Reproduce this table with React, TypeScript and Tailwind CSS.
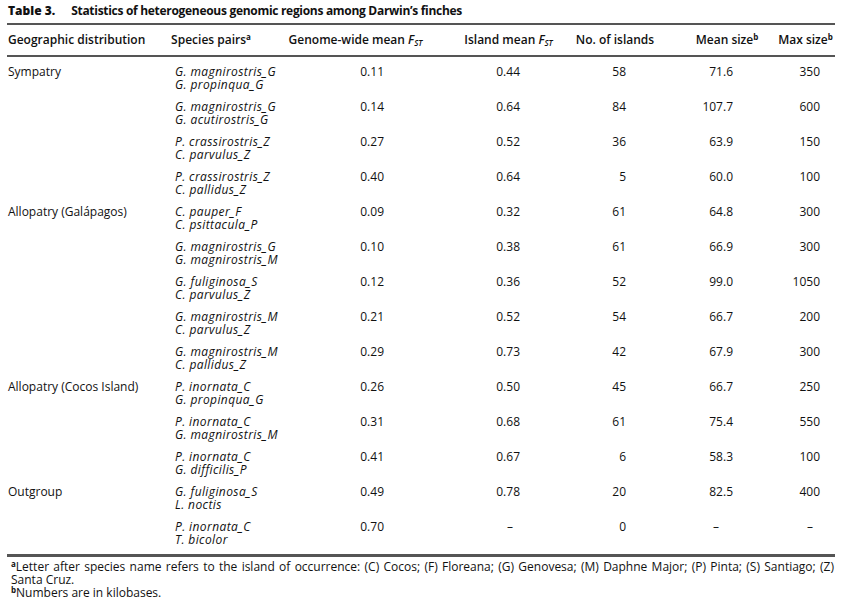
import React from "react";

type Row = {
  group?: string;
  sp1: string;
  sp2: string;
  gw: string;
  isl: string;
  n: string;
  mean: string;
  max: string;
};

const rows: Row[] = [
  { group: "Sympatry", sp1: "G. magnirostris_G", sp2: "G. propinqua_G", gw: "0.11", isl: "0.44", n: "58", mean: "71.6", max: "350" },
  { sp1: "G. magnirostris_G", sp2: "G. acutirostris_G", gw: "0.14", isl: "0.64", n: "84", mean: "107.7", max: "600" },
  { sp1: "P. crassirostris_Z", sp2: "C. parvulus_Z", gw: "0.27", isl: "0.52", n: "36", mean: "63.9", max: "150" },
  { sp1: "P. crassirostris_Z", sp2: "C. pallidus_Z", gw: "0.40", isl: "0.64", n: "5", mean: "60.0", max: "100" },
  { group: "Allopatry (Galápagos)", sp1: "C. pauper_F", sp2: "C. psittacula_P", gw: "0.09", isl: "0.32", n: "61", mean: "64.8", max: "300" },
  { sp1: "G. magnirostris_G", sp2: "G. magnirostris_M", gw: "0.10", isl: "0.38", n: "61", mean: "66.9", max: "300" },
  { sp1: "G. fuliginosa_S", sp2: "C. parvulus_Z", gw: "0.12", isl: "0.36", n: "52", mean: "99.0", max: "1050" },
  { sp1: "G. magnirostris_M", sp2: "C. parvulus_Z", gw: "0.21", isl: "0.52", n: "54", mean: "66.7", max: "200" },
  { sp1: "G. magnirostris_M", sp2: "C. pallidus_Z", gw: "0.29", isl: "0.73", n: "42", mean: "67.9", max: "300" },
  { group: "Allopatry (Cocos Island)", sp1: "P. inornata_C", sp2: "G. propinqua_G", gw: "0.26", isl: "0.50", n: "45", mean: "66.7", max: "250" },
  { sp1: "P. inornata_C", sp2: "G. magnirostris_M", gw: "0.31", isl: "0.68", n: "61", mean: "75.4", max: "550" },
  { sp1: "P. inornata_C", sp2: "G. difficilis_P", gw: "0.41", isl: "0.67", n: "6", mean: "58.3", max: "100" },
  { group: "Outgroup", sp1: "G. fuliginosa_S", sp2: "L. noctis", gw: "0.49", isl: "0.78", n: "20", mean: "82.5", max: "400" },
  { sp1: "P. inornata_C", sp2: "T. bicolor", gw: "0.70", isl: "–", n: "0", mean: "–", max: "–" },
];

function Fst() {
  return (
    <span className="italic">
      F<span className="text-[8px] relative top-[2px] leading-none">ST</span>
    </span>
  );
}

function Sup({ c }: { c: string }) {
  return <span className="text-[8px] relative top-[-4px] leading-none font-bold">{c}</span>;
}

export default function App() {
  return (
    <div
      className="w-[842px] h-[612px] bg-white text-[#111] pl-[7px] pr-[7px] pt-[4px]"
      style={{ fontFamily: "'Open Sans', Lato, sans-serif" }}
    >
      <div className="text-[12px] leading-[14px] font-bold pl-[1px] flex">
        <span className="font-extrabold">Table 3.</span>
        <span className="ml-[16px] font-bold tracking-[-0.3px]">Statistics of heterogeneous genomic regions among Darwin’s finches</span>
      </div>
      <table className="table-fixed border-collapse w-[828px] mt-[5px] text-[12px] leading-[13px]">
        <colgroup>
          <col className="w-[158px]" />
          <col className="w-[113px]" />
          <col className="w-[174px]" />
          <col className="w-[110px]" />
          <col className="w-[112px]" />
          <col className="w-[100px]" />
          <col className="w-[61px]" />
        </colgroup>
        <thead>
          <tr className="border-t-2 border-b-2 border-[#555]">
            <th className="text-left font-semibold pl-[1px] h-[32px] pb-[1px] whitespace-nowrap">Geographic distribution</th>
            <th className="text-center font-semibold pr-[21px] pb-[1px] whitespace-nowrap">
              Species pairs<Sup c="a" />
            </th>
            <th className="text-center font-semibold pr-[19px] pb-[1px] whitespace-nowrap">
              Genome-wide mean <Fst />
            </th>
            <th className="text-center font-semibold pl-[3px] pb-[1px] whitespace-nowrap">
              Island mean <Fst />
            </th>
            <th className="text-center font-semibold pr-[6px] pb-[1px] whitespace-nowrap">No. of islands</th>
            <th className="text-center font-semibold pl-[6px] pb-[1px] whitespace-nowrap">
              Mean size<Sup c="b" />
            </th>
            <th className="text-center font-semibold pl-[2px] pb-[1px] whitespace-nowrap">
              <div className="flex justify-center">
                <span>
                  Max size<Sup c="b" />
                </span>
              </div>
            </th>
          </tr>
        </thead>
        <tbody>
          {rows.map((r, i) => {
            const pt = i === 0 ? "pt-[8px]" : "pt-[5px]";
            const pb = i === rows.length - 1 ? "pb-[8px]" : "pb-[4px]";
            const cell = `${pt} ${pb} align-top`;
            return (
              <tr key={i}>
                <td className={`${cell} pl-[1px] whitespace-nowrap`}>{r.group ?? ""}</td>
                <td className={`${cell} pl-[10px] italic whitespace-nowrap tracking-[0.4px]`}>
                  <div>{r.sp1}</div>
                  <div>{r.sp2}</div>
                </td>
                <td className={`${cell} text-right pr-[68px]`}>{r.gw}</td>
                <td className={`${cell} text-right ${r.isl === "–" ? "pr-[49px]" : "pr-[42px]"}`}>{r.isl}</td>
                <td className={`${cell} text-right pr-[48px]`}>{r.n}</td>
                <td className={`${cell} text-right ${r.mean === "–" ? "pr-[55px]" : "pr-[41px]"}`}>{r.mean}</td>
                <td className={`${cell} text-right ${r.max === "–" ? "pr-[22px]" : "pr-[15px]"}`}>{r.max}</td>
              </tr>
            );
          })}
        </tbody>
      </table>
      <div className="border-t-[3px] border-[#555] w-[828px] pt-[3px] text-[12px] leading-[13px] pl-[4px] pr-[1px]">
        <p className="text-justify">
          <Sup c="a" />Letter after species name refers to the island of occurrence: (C) Cocos; (F) Floreana; (G) Genovesa; (M) Daphne Major; (P) Pinta; (S) Santiago; (Z) Santa Cruz.
        </p>
        <p>
          <Sup c="b" />Numbers are in kilobases.
        </p>
      </div>
    </div>
  );
}
